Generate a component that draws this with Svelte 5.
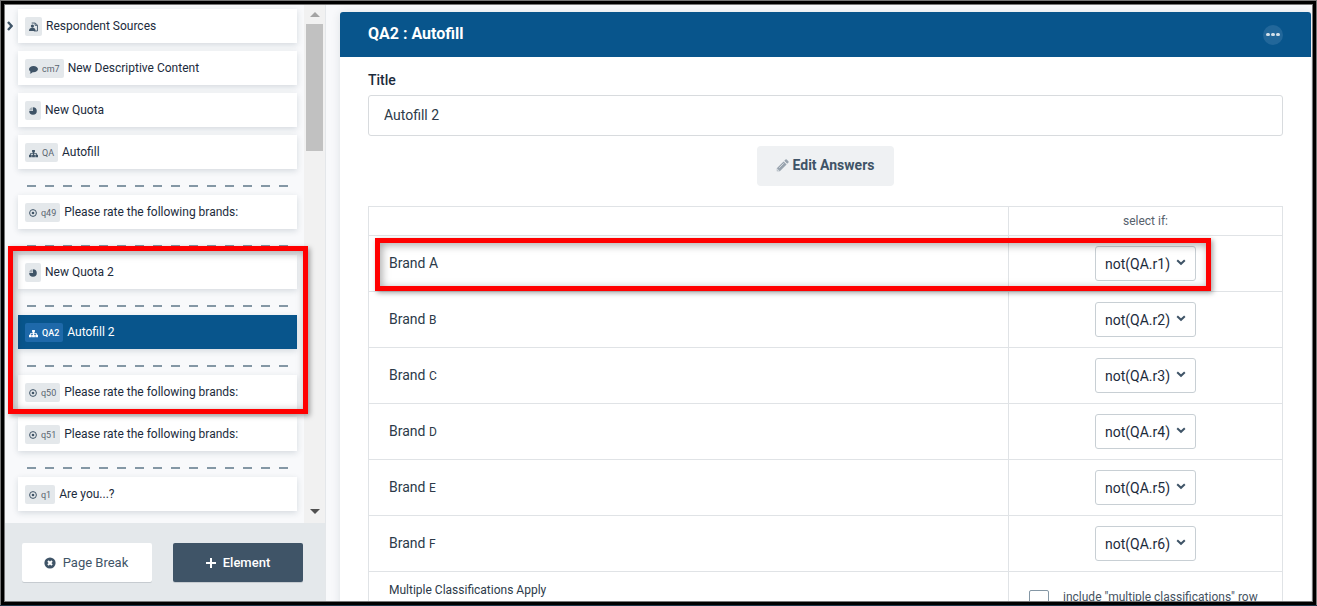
<script>
  const groups = [
    [
      { icon: "source", label: "Respondent Sources" },
      { icon: "comment", id: "cm7", label: "New Descriptive Content" },
      { icon: "pie", label: "New Quota" },
      { icon: "sitemap", id: "QA", label: "Autofill" },
    ],
    [{ icon: "radio", id: "q49", label: "Please rate the following brands:" }],
    [{ icon: "pie", label: "New Quota 2" }],
    [{ icon: "sitemap", id: "QA2", label: "Autofill 2", active: true }],
    [
      { icon: "radio", id: "q50", label: "Please rate the following brands:" },
      { icon: "radio", id: "q51", label: "Please rate the following brands:" },
    ],
    [{ icon: "radio", id: "q1", label: "Are you...?" }],
  ];

  const brands = ["A", "B", "C", "D", "E", "F"];

  let title = "Autofill 2";
</script>

<div class="frame">
  <div class="app">
    <aside>
      <div class="survey">
        <div class="tree">
          <svg class="caret" viewBox="0 0 6 10"><path d="M1 1l3.6 4L1 9" /></svg>
          {#each groups as group, i}
            {#if i > 0}
              <div class="break"></div>
            {/if}
            <div class="page">
              {#each group as item}
                <div class="item" class:active={item.active}>
                  <span class="tag">
                    {#if item.icon === "source"}
                      <svg width="9" height="10" viewBox="0 0 10 10">
                        <path class="line" d="M3 .6h4L9.4 3v6.4H5.5M6.8.8v2.4h2.4" />
                        <circle cx="3.8" cy="3.9" r="1.8" />
                        <path d="M0 9.4C0 7 1.3 5.8 3.8 5.8S7.2 7 7.2 9.4z" />
                      </svg>
                    {:else if item.icon === "comment"}
                      <svg width="9" height="9" viewBox="0 0 9 9">
                        <path d="M4.500.9C7 .9 9 2.300 9 4.100S7 7.300 4.500 7.300l-.9-.1C2.900 8 2 8.500.7 8.600c.5-.5.8-1 .8-1.900C.5 6 0 5.100 0 4.100 0 2.300 2 .9 4.500.9z" />
                      </svg>
                    {:else if item.icon === "pie"}
                      <svg width="8" height="8" viewBox="0 0 8 8">
                        <path d="M4 .2A3.800 3.800 0 1 1 .2 4H4z" />
                        <path class="faint" d="M3.600.2v3.400H.2A3.600 3.600 0 0 1 3.600.2z" />
                      </svg>
                    {:else if item.icon === "sitemap"}
                      <svg width="9" height="9" viewBox="0 0 9 9">
                        <path d="M3.100.9h2.800v2.500H5v.9h2.900v1.400H9v2.600H6.300V5.700h.8v-.6H5v.6h.9v2.600H3.100V5.700H4v-.6H1.900v.6h.8v2.600H0V5.700h1.100V4.300H4v-.9h-.9z" />
                      </svg>
                    {:else}
                      <svg width="8" height="8" viewBox="0 0 8 8">
                        <circle class="line" cx="4" cy="4" r="3.400" />
                        <circle cx="4" cy="4" r="1.300" />
                      </svg>
                    {/if}
                    {#if item.id}<span class="id">{item.id}</span>{/if}
                  </span>
                  <span class="label">{item.label}</span>
                </div>
              {/each}
            </div>
          {/each}
        </div>
        <div class="scrollbar">
          <span class="up"></span>
          <div class="track"><div class="thumb"></div></div>
          <span class="down"></span>
        </div>
      </div>

      <footer>
        <button class="light">
          <svg width="12" height="12" viewBox="0 0 12 12">
            <circle cx="6" cy="6" r="5.600" />
            <path d="M4 4l4 4M8 4l-4 4" />
          </svg>
          Page Break
        </button>
        <button class="dark">
          <svg width="10" height="10" viewBox="0 0 10 10">
            <path d="M5 0v10M0 5h10" />
          </svg>
          Element
        </button>
      </footer>
    </aside>

    <main>
      <div class="card">
        <header>
          <h1>QA2 : Autofill</h1>
          <span class="more"><i></i><i></i><i></i></span>
        </header>
        <section>
          <label for="title">Title</label>
          <input id="title" bind:value={title} />
          <button class="edit">
            <svg width="13" height="13" viewBox="0 0 13 13">
              <path d="M.8 9.200L7.600 2.400l3 3L3.800 12.200H.8z" />
              <path d="M8.300 1.800l1.200-1.200q.6-.5 1.200 0l1.700 1.700q.5.6 0 1.200l-1.200 1.200z" />
              <path class="shine" d="M3.200 8.800l4.500-4.500M1.600 9.800v1.600h1.600" />
            </svg>
            Edit Answers
          </button>

          <div class="grid">
            <div class="row head">
              <div></div>
              <div class="pick">select if:</div>
            </div>
            {#each brands as brand, i}
              <div class="row">
                <div class="name">Brand <span class:small={i > 0}>{brand}</span></div>
                <div class="pick">
                  <div class="select">
                    not(QA.r{i + 1})
                    <svg width="10" height="7" viewBox="0 0 10 7"><path d="M1.200 1.200L5 4.800l3.800-3.600" /></svg>
                  </div>
                </div>
              </div>
            {/each}
            <div class="row last">
              <div class="name">Multiple Classifications Apply</div>
              <div class="include">
                <span class="checkbox"></span>
                include "multiple classifications" row
              </div>
            </div>
          </div>
        </section>
      </div>
    </main>
  </div>

  <div class="mark mark-pages"></div>
  <div class="mark mark-row"></div>
</div>

<style>
  :global(body) {
    overflow: hidden;
  }
  .frame {
    position: relative;
    box-sizing: border-box;
    width: 1317px;
    height: 606px;
    padding: 1px;
    background: linear-gradient(#777, #777) 0 0 / 100% 605px no-repeat, #1d3548;
    font-family: Roboto, sans-serif;
    color: #1c2b3c;
  }
  .app {
    display: flex;
    box-sizing: border-box;
    height: 604px;
    border: 3px solid #000;
    box-shadow: inset 0 0 0 1px #777;
    padding: 1px;
    overflow: hidden;
    background: #f8f9fb;
  }
  aside {
    display: flex;
    flex-direction: column;
    flex: none;
    width: 320px;
    border-right: 1px solid #e4e7ea;
  }
  .survey {
    display: flex;
    flex: none;
    height: 518px;
  }
  .tree {
    position: relative;
    width: 299px;
    padding: 4px 7px 0 13px;
    box-sizing: border-box;
  }
  .caret {
    position: absolute;
    left: 2px;
    top: 16px;
    width: 6px;
    height: 10px;
    fill: none;
    stroke: #3f5467;
    stroke-width: 2.4;
  }
  .page {
    display: flex;
    flex-direction: column;
    gap: 8px;
  }
  .item {
    display: flex;
    align-items: center;
    height: 34px;
    box-sizing: border-box;
    padding: 0 7px;
    background: #fff;
    box-shadow: 0 2px 6px rgba(40, 60, 80, 0.16);
    font-size: 12px;
  }
  .label {
    margin-left: 4px;
  }
  .tag {
    display: flex;
    align-items: center;
    box-sizing: border-box;
    height: 19px;
    margin-top: 1px;
    padding: 1px 4px 0;
    border-radius: 2px;
    background: #e4e8eb;
    color: #5a6570;
    font-size: 9px;
  }
  .tag svg {
    fill: #3f5467;
  }
  .tag .line {
    fill: none;
    stroke: #3f5467;
    stroke-width: 1;
  }
  .tag .faint {
    opacity: 0.4;
  }
  .id {
    margin-left: 4px;
  }
  .active {
    background: #08558c;
    color: #fff;
  }
  .active .tag {
    background: #1e69aa;
    color: #fff;
    font-weight: 500;
  }
  .active .tag svg {
    fill: #fff;
  }
  .break {
    height: 2px;
    margin: 16px 9px 8px;
    background: repeating-linear-gradient(90deg, #8497a5 0 9px, transparent 9px 18px);
  }
  .scrollbar {
    display: flex;
    flex-direction: column;
    align-items: center;
    width: 21px;
    background: #f1f1f1;
  }
  .up,
  .down {
    width: 0;
    border: 5px solid transparent;
  }
  .up {
    margin-top: 2px;
    border-bottom-color: #a3a3a3;
  }
  .down {
    margin-bottom: 4px;
    border-top-color: #505050;
  }
  .track {
    flex: 1;
    padding-top: 7px;
  }
  .thumb {
    width: 17px;
    height: 127px;
    background: #c1c1c1;
  }
  footer {
    display: flex;
    flex: 1;
    gap: 21px;
    padding: 20px 17px 0;
    background: #e4e8eb;
  }
  button {
    display: flex;
    align-items: center;
    justify-content: center;
    border: 0;
    font-family: inherit;
  }
  footer button {
    width: 130px;
    height: 39px;
    padding: 0;
    border-radius: 2px;
    font-size: 13px;
    box-shadow: 0 1px 0 #c6cbd0;
  }
  footer .light {
    gap: 7px;
    padding-right: 2px;
    background: #fff;
    color: #3f5467;
  }
  .light circle {
    fill: #3f5467;
  }
  .light path {
    stroke: #fff;
    stroke-width: 2;
  }
  .dark {
    gap: 7px;
    background: #3f5467;
    color: #fff;
    font-weight: 500;
  }
  .dark path {
    stroke: #fff;
    stroke-width: 2;
  }
  main {
    flex: 1;
    padding: 7px 1px 0 14px;
    overflow: hidden;
  }
  .card {
    height: 640px;
    border-radius: 4px 4px 0 0;
    background: #fff;
    box-shadow: 0 1px 10px rgba(40, 60, 80, 0.13);
  }
  header {
    display: flex;
    align-items: center;
    justify-content: space-between;
    height: 45px;
    padding: 0 28px;
    border-radius: 3px 3px 0 0;
    background: #08558c;
    color: #fff;
  }
  h1 {
    margin: 0 0 2px;
    font-size: 16px;
    font-weight: 700;
  }
  .more {
    display: flex;
    align-items: center;
    justify-content: center;
    gap: 1.5px;
    width: 20px;
    height: 20px;
    border-radius: 50%;
    background: #22679a;
  }
  .more i {
    width: 3.4px;
    height: 3.4px;
    border-radius: 1.7px;
    background: #d3e0ea;
  }
  section {
    padding: 0 28px;
  }
  label {
    display: block;
    padding-top: 14px;
    height: 24px;
    line-height: 18px;
    font-size: 14px;
    font-weight: 500;
  }
  input {
    display: block;
    box-sizing: border-box;
    width: 100%;
    height: 41px;
    padding: 0 15px 2px;
    border: 1px solid #d8dbde;
    border-radius: 3px;
    background: #fff;
    color: #2c3a49;
    font: 14px Roboto, sans-serif;
  }
  .edit {
    gap: 4px;
    width: 137px;
    height: 40px;
    margin: 10px auto 20px;
    padding: 0 1px 2px 0;
    border-radius: 4px;
    background: #eff1f3;
    color: #3f5467;
    font-size: 14px;
    font-weight: 700;
  }
  .edit svg {
    margin-top: 1px;
  }
  .edit path {
    fill: #98a3ae;
  }
  .edit .shine {
    fill: none;
    stroke: #e4e8eb;
    stroke-width: 0.8;
  }
  .grid {
    border: 1px solid #e0e3e6;
  }
  .row {
    display: grid;
    grid-template-columns: 639px 1fr;
    height: 55px;
    border-top: 1px solid #e0e3e6;
    font-size: 14px;
    color: #2c3a49;
  }
  .row > :last-child {
    border-left: 1px solid #e0e3e6;
  }
  .head {
    height: 28px;
    border-top: 0;
    font-size: 12px;
    color: #56616c;
  }
  .name {
    padding: 19px 20px 0;
    line-height: 17px;
  }
  .small {
    font-size: 12px;
  }
  .pick {
    display: flex;
    align-items: center;
    justify-content: center;
  }
  .select {
    display: flex;
    align-items: center;
    justify-content: space-between;
    box-sizing: border-box;
    width: 101px;
    height: 35px;
    padding: 0 9px;
    border: 1px solid #c8cfd4;
    border-radius: 3px;
    color: #1c2b3c;
  }
  .select svg {
    margin-bottom: 2px;
    fill: none;
    stroke: #3f5467;
    stroke-width: 2;
  }
  .last {
    font-size: 12px;
  }
  .last .name {
    padding-top: 10px;
  }
  .include {
    display: flex;
    gap: 14px;
    padding: 17px 0 0 20px;
    line-height: 16px;
    color: #46535f;
  }
  .checkbox {
    box-sizing: border-box;
    width: 20px;
    height: 20px;
    margin-top: 1px;
    border: 1px solid #8497a5;
    border-radius: 2px;
  }
  /* callouts drawn over the editor */
  .mark {
    position: absolute;
    box-sizing: border-box;
    border: 5px solid #f00;
    box-shadow: 2px 2px 5px rgba(0, 0, 0, 0.35), inset 2px 2px 8px rgba(0, 0, 0, 0.35);
  }
  .mark-pages {
    left: 8px;
    top: 246px;
    width: 300px;
    height: 168px;
  }
  .mark-row {
    left: 375px;
    top: 238px;
    width: 836px;
    height: 53px;
  }
</style>
